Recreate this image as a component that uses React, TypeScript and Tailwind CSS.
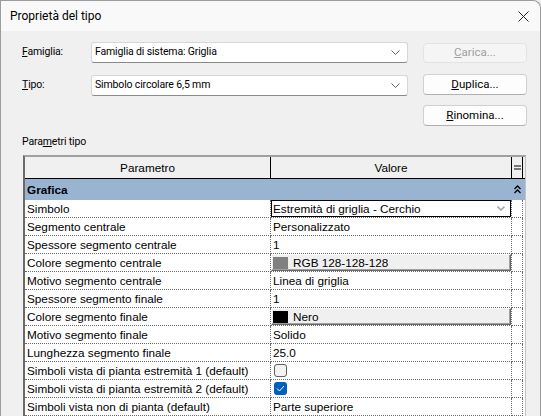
import React from 'react'

const rows: { name: string; kind: 'text' | 'combo' | 'color' | 'check'; value?: string; swatch?: string; checked?: boolean }[] = [
  { name: 'Simbolo', kind: 'combo', value: 'Estremità di griglia - Cerchio' },
  { name: 'Segmento centrale', kind: 'text', value: 'Personalizzato' },
  { name: 'Spessore segmento centrale', kind: 'text', value: '1' },
  { name: 'Colore segmento centrale', kind: 'color', value: 'RGB 128-128-128', swatch: '#808080' },
  { name: 'Motivo segmento centrale', kind: 'text', value: 'Linea di griglia' },
  { name: 'Spessore segmento finale', kind: 'text', value: '1' },
  { name: 'Colore segmento finale', kind: 'color', value: 'Nero', swatch: '#000000' },
  { name: 'Motivo segmento finale', kind: 'text', value: 'Solido' },
  { name: 'Lunghezza segmento finale', kind: 'text', value: '25.0' },
  { name: 'Simboli vista di pianta estremità 1 (default)', kind: 'check', checked: false },
  { name: 'Simboli vista di pianta estremità 2 (default)', kind: 'check', checked: true },
  { name: 'Simboli vista non di pianta (default)', kind: 'text', value: 'Parte superiore' },
]

function Chevron() {
  return (
    <svg width="9" height="5" viewBox="0 0 9 5" className="shrink-0">
      <path d="M0.5 0.5 L4.5 4.5 L8.5 0.5" fill="none" stroke="#606060" strokeWidth="1" />
    </svg>
  )
}

function Combo({ text }: { text: string }) {
  return (
    <div className="w-[317px] h-[21px] bg-white border border-[#d6d6d6] border-b-[#8a8a8a] rounded-[3px] flex items-center justify-between pl-[3px] pr-[7px]">
      <span className="text-[10.5px] tracking-[-0.15px]">{text}</span>
      <Chevron />
    </div>
  )
}

function Btn({ children, disabled }: { children: React.ReactNode; disabled?: boolean }) {
  return (
    <div
      className={
        disabled
          ? 'w-[104px] h-[20px] rounded-[4px] border border-[#e3e3e3] bg-[#f5f5f5] text-[#a0a0a0] flex items-center justify-center'
          : 'w-[104px] h-[21px] rounded-[4px] border border-[#d0d0d0] border-b-[#b0b0b0] bg-[#fdfdfd] flex items-center justify-center'
      }
    >
      {children}
    </div>
  )
}

export default function App() {
  return (
    <div className="w-[541px] h-[416px] overflow-hidden bg-[#f0f0f0] font-['Roboto',Arial,sans-serif] text-[11.5px] text-black leading-none">
      <div className="h-[416px] border-l border-t border-r border-[#9c9c9c] rounded-tr-[8px] flex flex-col overflow-hidden">
        {/* title bar */}
        <div className="h-[30px] shrink-0 bg-[#f9f9f9] rounded-tr-[8px] flex items-center justify-between pl-[9px] pr-[11px]">
          <span className="text-[12px]">Proprietà del tipo</span>
          <svg width="11" height="11" viewBox="0 0 11 11">
            <path d="M0.5 0.5 L10.5 10.5 M10.5 0.5 L0.5 10.5" stroke="#222" strokeWidth="1" />
          </svg>
        </div>

        <div className="shrink-0 pl-[21px]">
          <div className="flex items-start mt-[11px]">
            <div className="w-[69px] h-[21px] flex items-center text-[10.5px] tracking-[-0.15px]"><span><u>F</u>amiglia:</span></div>
            <Combo text="Famiglia di sistema: Griglia" />
            <div className="ml-[15px] mt-[1px]">
              <Btn disabled><u>C</u>arica...</Btn>
            </div>
          </div>
          <div className="flex items-start mt-[12px]">
            <div className="w-[69px] h-[21px] flex items-center text-[10.5px] tracking-[-0.15px]"><span><u>T</u>ipo:</span></div>
            <Combo text="Simbolo circolare 6,5 mm" />
            <div className="ml-[15px] -mt-[1px]">
              <Btn><u>D</u>uplica...</Btn>
            </div>
          </div>
          <div className="flex mt-[9px] pl-[401px]">
            <Btn><u>R</u>inomina...</Btn>
          </div>

          <div className="mt-[9px] h-[14px] flex items-center text-[10.5px] tracking-[-0.15px]">
            <span>Para<u>m</u>etri tipo</span>
          </div>

          {/* table */}
          <div className="mt-[6px] ml-[1px] w-[503px] border-t-[2px] border-t-[#a0a0a0] border-l-[2px] border-l-[#6a6a6a] border-r border-r-[#c4c4c4] bg-white h-[300px] font-['Liberation_Sans',Arial,sans-serif] text-[11.75px]">
            <div className="flex h-[22px] bg-[#f0f0f0] border-b border-black">
              <div className="w-[246px] border-r border-black flex items-center justify-center">Parametro</div>
              <div className="w-[241px] border-r border-black flex items-center justify-center">Valore</div>
              <div className="w-[11px] border-r border-black flex items-center justify-center">
                <svg width="7" height="5" viewBox="0 0 7 5"><path d="M0 1 H7 M0 4 H7" stroke="#000" strokeWidth="1" /></svg>
              </div>
            </div>
            <div className="flex h-[21px] bg-[#99b4d1]">
              <div className="w-[487px] pl-[2px] flex items-center font-bold">Grafica</div>
              <div className="w-[11px] flex items-center justify-center">
                <svg width="7" height="9" viewBox="0 0 7 9">
                  <path d="M0.5 4 L3.5 1 L6.5 4 M0.5 8 L3.5 5 L6.5 8" fill="none" stroke="#000" strokeWidth="1.3" />
                </svg>
              </div>
            </div>
            {rows.map((r) => (
              <div key={r.name} className="flex h-[18px]">
                <div className="w-[246px] border-r border-b border-dotted border-[#6a6a6a] pl-[2px] flex items-center whitespace-nowrap">{r.name}</div>
                <div className="w-[241px] border-r border-b border-dotted border-[#6a6a6a] flex items-stretch">
                  {r.kind === 'text' && <div className="pl-[2px] flex items-center">{r.value}</div>}
                  {r.kind === 'combo' && (
                    <div className="flex-1 border border-black flex items-center justify-between pl-[1px] pr-[5px]">
                      <span>{r.value}</span>
                      <svg width="8" height="5" viewBox="0 0 8 5">
                        <path d="M0.5 0.5 L4 4 L7.5 0.5" fill="none" stroke="#a8a8a8" strokeWidth="1.6" />
                      </svg>
                    </div>
                  )}
                  {r.kind === 'color' && (
                    <div className="flex-1 bg-[#f0f0f0] border border-t-white border-l-white border-b-[#696969] border-r-[#696969] shadow-[inset_-1px_-1px_0_#a0a0a0] flex items-center pl-[1px]">
                      <div className="w-[15px] h-[12px]" style={{ background: r.swatch }} />
                      <span className="ml-[5px]">{r.value}</span>
                    </div>
                  )}
                  {r.kind === 'check' && (
                    <div className="pl-[3px] flex items-center">
                      {r.checked ? (
                        <div className="w-[13px] h-[13px] rounded-[3px] bg-[#005fb8] flex items-center justify-center">
                          <svg width="9" height="7" viewBox="0 0 9 7">
                            <path d="M1 3.5 L3.5 6 L8 1" fill="none" stroke="#fff" strokeWidth="1" />
                          </svg>
                        </div>
                      ) : (
                        <div className="w-[13px] h-[13px] rounded-[3px] bg-[#f3f3f3] border border-[#5f5f5f]" />
                      )}
                    </div>
                  )}
                </div>
                <div className="w-[11px] border-r border-b border-dotted border-[#6a6a6a]" />
              </div>
            ))}
          </div>
        </div>
      </div>
    </div>
  )
}
